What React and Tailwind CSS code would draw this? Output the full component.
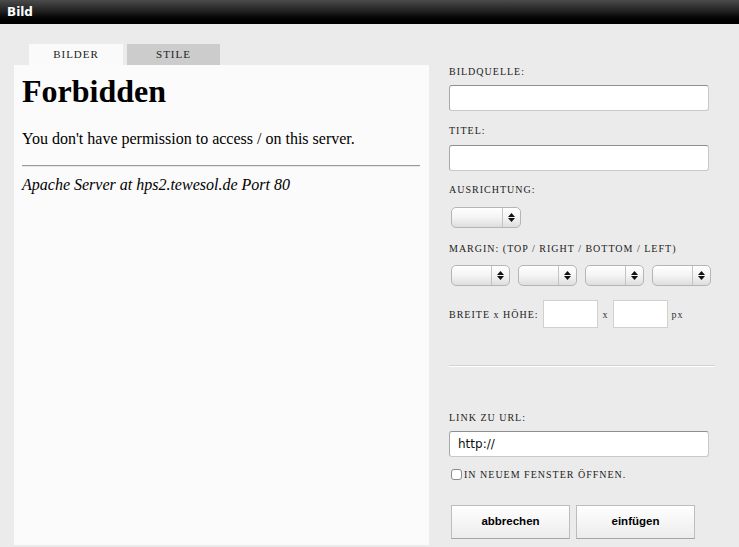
import React from "react";

const serif = "font-['Liberation_Serif','Times_New_Roman',serif]";
const label = `${serif} text-[10px] leading-[12px] tracking-[1px] text-[#222] uppercase`;

const FakeSelect = ({ width }) => (
  <div
    className={`flex h-[21px] ${width} items-stretch rounded-[5px] border border-[#b5b5b5] bg-gradient-to-b from-white via-[#f4f4f4] to-[#dedede] shadow-[inset_0_1px_0_#fff]`}
  >
    <div className="flex-1" />
    <div className="flex w-[18px] flex-col items-center justify-center gap-[1px] border-l border-[#c4c4c4]">
      <svg width="7" height="4" viewBox="0 0 7 4">
        <path d="M3.5 0L7 4H0z" fill="#111" />
      </svg>
      <svg width="7" height="4" viewBox="0 0 7 4">
        <path d="M0 0h7L3.5 4z" fill="#111" />
      </svg>
    </div>
  </div>
);

const TextInput = ({ value = "", className = "" }) => (
  <div
    className={`h-[26px] w-[260px] rounded-[3px] border border-[#c8c8c8] border-t-[#8f8f8f] border-l-[#a8a8a8] bg-white px-[8px] text-[12px] leading-[24px] text-[#111] font-['DejaVu_Sans','Verdana',sans-serif] ${className}`}
  >
    {value}
  </div>
);

const btn =
  "h-[34px] w-[119px] border border-[#bdbdbd] border-b-[#a5a5a5] bg-gradient-to-b from-white to-[#ececec] text-[11.5px] font-bold text-black font-['Liberation_Sans','Arial',sans-serif]";

export default function App() {
  return (
    <div className="flex h-[547px] w-[739px] flex-col overflow-hidden bg-[#ebebeb]">
      {/* Title bar */}
      <div className="flex h-[24px] items-center bg-gradient-to-b from-[#4c4c4c] via-[#1e1e1e] to-black px-[7px]">
        <span className="text-[12px] font-bold text-white font-['DejaVu_Sans',sans-serif]">
          Bild
        </span>
      </div>

      <div className="flex flex-1">
        {/* Left column */}
        <div className="flex flex-col pl-[14px] pt-[20px]">
          <div className="ml-[15px] flex gap-[4px]">
            <div className={`flex h-[21px] w-[94px] items-center justify-center bg-[#fafafa] ${serif} text-[11px] tracking-[1px] text-[#222]`}>
              BILDER
            </div>
            <div className={`flex h-[21px] w-[93px] items-center justify-center bg-[#cccccc] ${serif} text-[11px] tracking-[1px] text-[#222]`}>
              STILE
            </div>
          </div>
          <div className={`h-[480px] w-[415px] bg-[#fbfbfb] px-[8px] ${serif} text-black`}>
            <h1 className="mt-[10px] text-[32px] font-bold leading-[32px]">Forbidden</h1>
            <p className="mt-[23px] text-[16px] leading-[18px]">
              You don't have permission to access / on this server.
            </p>
            <div className="mt-[17px] mr-[1px] h-[2px] border-t border-[#9a9a9a] border-b border-b-[#e8e8e8]" />
            <div className="mt-[9px] text-[16px] italic leading-[18px]">
              Apache Server at hps2.tewesol.de Port 80
            </div>
          </div>
        </div>

        {/* Right column */}
        <div className="ml-[20px] flex w-[266px] flex-col pt-[42px]">
          <div className={label}>Bildquelle:</div>
          <TextInput className="mt-[7px]" />

          <div className={`${label} mt-[14px]`}>Titel:</div>
          <TextInput className="mt-[8px]" />

          <div className={`${label} mt-[13px]`}>Ausrichtung:</div>
          <div className="mt-[11px] ml-[2px]">
            <FakeSelect width="w-[70px]" />
          </div>

          <div className={`${label} mt-[15px]`}>Margin: (Top / Right / Bottom / Left)</div>
          <div className="mt-[10px] ml-[2px] flex gap-[8px]">
            <FakeSelect width="w-[59px]" />
            <FakeSelect width="w-[59px]" />
            <FakeSelect width="w-[59px]" />
            <FakeSelect width="w-[59px]" />
          </div>

          <div className="mt-[14px] flex items-center">
            <span className={`${serif} text-[10px] tracking-[1px] text-[#222]`}>BREITE x HÖHE:</span>
            <div className="ml-[4px] h-[28px] w-[55px] border border-[#d0d0d0] bg-white" />
            <span className={`${serif} ml-[5px] text-[10px] text-[#333]`}>x</span>
            <div className="ml-[5px] h-[28px] w-[55px] border border-[#d0d0d0] bg-white" />
            <span className={`${serif} ml-[4px] text-[10px] tracking-[1px] text-[#333]`}>px</span>
          </div>

          <div className="mt-[37px] h-[2px] w-[266px] border-t border-[#d2d2d2] border-b border-b-white" />

          <div className={`${label} mt-[45px]`}>Link zu URL:</div>
          <TextInput value="http://" className="mt-[7px]" />

          <div className="mt-[10px] ml-[2px] flex items-center gap-[2px]">
            <div className="h-[11px] w-[11px] rounded-[3px] border border-[#8a8a8a] bg-white" />
            <span className={`${serif} text-[10px] tracking-[1px] text-[#222]`}>IN NEUEM FENSTER ÖFFNEN.</span>
          </div>

          <div className="mt-[23px] ml-[2px] flex gap-[6px]">
            <button className={btn}>abbrechen</button>
            <button className={btn}>einfügen</button>
          </div>
        </div>
      </div>
    </div>
  );
}
